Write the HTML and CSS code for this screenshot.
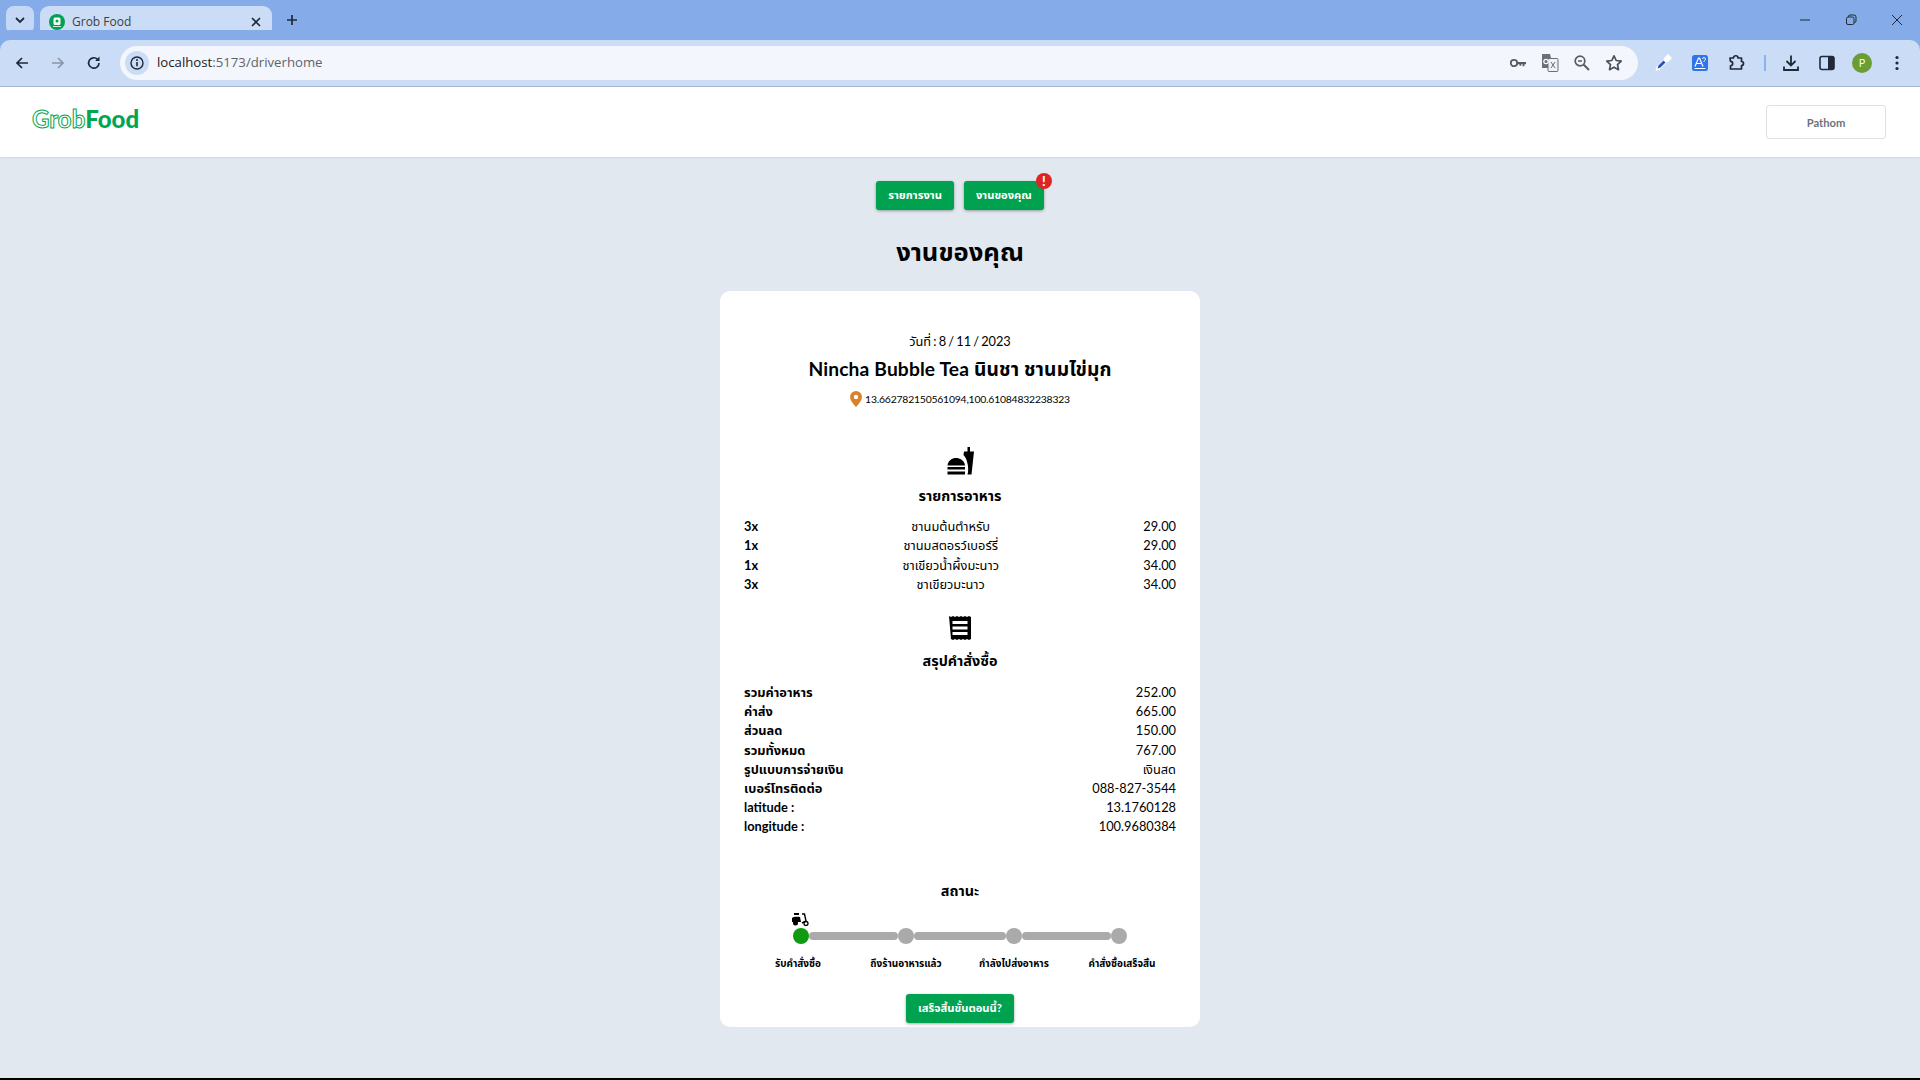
FILE: index.html
```html
<!DOCTYPE html>
<html lang="th">
	<head>
		<meta charset="utf-8">
		<title>Grob Food</title>
		<link rel="stylesheet" href="styles.css">
	</head>
	<body>
		<div class="tab-strip">
			<div class="tab-search">
				<svg width="12" height="12" viewBox="0 0 12 12"><path d="M2 4l4 4 4-4" fill="none" stroke="#1f2937" stroke-width="1.8"/></svg>
			</div>
			<div class="tab">
				<svg class="favicon" width="16" height="16" viewBox="0 0 16 16"><circle cx="8" cy="8" r="8" fill="#00a14f"/><rect x="4.5" y="3.5" width="7" height="7.5" rx="1.5" fill="#fff"/><circle cx="8" cy="7" r="1.5" fill="#00a14f"/><rect x="4" y="12" width="8" height="1" fill="#c9ecd8"/></svg>
				<span class="tab-title">Grob Food</span>
				<svg class="tab-close" width="10" height="10" viewBox="0 0 10 10"><path d="M1 1l8 8M9 1l-8 8" stroke="#1f2937" stroke-width="1.6"/></svg>
			</div>
			<svg class="new-tab" width="12" height="12" viewBox="0 0 12 12"><path d="M6 1v10M1 6h10" stroke="#1f2937" stroke-width="1.7"/></svg>
			<div class="window-controls">
				<svg width="12" height="12" viewBox="0 0 12 12"><path d="M1 6h10" stroke="#1f2937" stroke-width="1"/></svg>
				<svg width="12" height="12" viewBox="0 0 12 12"><rect x="1.5" y="3" width="7.5" height="7.5" rx="1.5" fill="none" stroke="#1f2937"/><path d="M3.5 3V2.5a1.5 1.5 0 0 1 1.5-1.5h4a2 2 0 0 1 2 2v4a1.5 1.5 0 0 1-1.5 1.5H9" fill="none" stroke="#1f2937"/></svg>
				<svg width="12" height="12" viewBox="0 0 12 12"><path d="M1 1l10 10M11 1L1 11" stroke="#1f2937" stroke-width="1"/></svg>
			</div>
		</div>

		<div class="toolbar">
			<div class="nav-buttons">
				<svg width="16" height="16" viewBox="0 0 16 16"><path d="M14 8H3M8 3L3 8l5 5" fill="none" stroke="#1f2937" stroke-width="1.7"/></svg>
				<svg width="16" height="16" viewBox="0 0 16 16"><path d="M2 8h11M8 3l5 5-5 5" fill="none" stroke="#8b95a5" stroke-width="1.7"/></svg>
				<svg width="16" height="16" viewBox="0 0 16 16"><path d="M13 8a5.2 5.2 0 1 1-1.6-3.8" fill="none" stroke="#1f2937" stroke-width="1.7"/><path d="M13.5 1.5v4.4H9.1z" fill="#1f2937"/></svg>
			</div>
			<div class="omnibox">
				<span class="site-info">
					<svg width="14" height="14" viewBox="0 0 14 14"><circle cx="7" cy="7" r="6" fill="none" stroke="#1f2937" stroke-width="1.4"/><path d="M7 6v4.2" stroke="#1f2937" stroke-width="1.6"/><circle cx="7" cy="4" r="1" fill="#1f2937"/></svg>
				</span>
				<span class="url"><span class="url-host">localhost</span>:5173/driverhome</span>
				<div class="omni-actions">
					<svg width="18" height="18" viewBox="0 0 18 18"><circle cx="5" cy="9" r="3.2" fill="none" stroke="#555c66" stroke-width="1.8"/><path d="M8 8h9v2.2h-1.6v2h-1.8v-2h-1.4v1.6h-1.7v-1.6H8z" fill="#555c66"/></svg>
					<svg width="18" height="18" viewBox="0 0 18 18"><path d="M1 0h8l1 4v10H1z" fill="#6b6f76"/><rect x="7" y="4.500" width="10" height="13" rx="1" fill="#eef1f5" stroke="#6b6f76"/><path d="M10 8l4 6M14 8l-4 6" stroke="#6b6f76" stroke-width="1"/><circle cx="5" cy="7.500" r="2.200" fill="none" stroke="#fff" stroke-width="1.200"/></svg>
					<svg width="18" height="18" viewBox="0 0 18 18"><circle cx="7" cy="7" r="4.800" fill="none" stroke="#555c66" stroke-width="1.700"/><path d="M5 7h4" stroke="#555c66" stroke-width="1.500"/><path d="M10.500 10.500L16 16" stroke="#555c66" stroke-width="2"/></svg>
					<svg width="18" height="18" viewBox="0 0 18 18"><path d="M9 1.800l2.200 4.700 5 .6-3.700 3.500 1 5.100L9 13.200l-4.500 2.500 1-5.100L1.800 7.100l5-.6z" fill="none" stroke="#4a505a" stroke-width="1.700" stroke-linejoin="round"/></svg>
				</div>
			</div>
			<div class="extensions">
				<svg width="20" height="20" viewBox="0 0 20 20"><path d="M12 5l3 3-8.500 8.800-4 1.200 1-4.200z" fill="#fff"/><path d="M4.500 15.500l1-3 5-5 2 2-5 5z" fill="#2b50b8"/><path d="M11 5l4-4 4 4-4 4z" fill="#fff"/></svg>
				<svg width="16" height="16" viewBox="0 0 16 16"><rect width="16" height="16" rx="2.500" fill="#2f74ea"/><path d="M3 11.500L6.500 3h1L11 11.500M4.500 8.500h4.500" fill="none" stroke="#fff" stroke-width="1.200"/><path d="M2.500 13.500h11" stroke="#fff"/><path d="M10.500 4a1.500 1.500 0 1 1 2 1.500l-.5.800v.7" fill="none" stroke="#fff"/></svg>
				<svg width="18" height="18" viewBox="0 0 18 18"><path d="M3 4h3.500a2 2 0 0 1 4.500 0H14.500v3.500a2 2 0 0 1 0 4V15H3.500v-3.200a2.200 2.200 0 0 0 0-4.400z" fill="none" stroke="#1f2937" stroke-width="1.700" stroke-linejoin="round"/></svg>
				<span class="toolbar-sep"></span>
				<svg width="18" height="18" viewBox="0 0 18 18"><path d="M9 1.500v9M4.500 7L9 11.500 13.500 7M2 12.500v3.500h14v-3.500" fill="none" stroke="#1f2937" stroke-width="1.800"/></svg>
				<svg width="16" height="16" viewBox="0 0 16 16"><rect x="1" y="1.500" width="14" height="13" rx="2" fill="none" stroke="#1f2937" stroke-width="1.600"/><path d="M9 1.500h4a2 2 0 0 1 2 2v9a2 2 0 0 1-2 2H9z" fill="#1f2937"/></svg>
				<span class="avatar">P</span>
				<svg class="menu-dots" width="14" height="16" viewBox="0 0 14 16"><circle cx="7" cy="2.500" r="1.600" fill="#1f2937"/><circle cx="7" cy="8" r="1.600" fill="#1f2937"/><circle cx="7" cy="13.500" r="1.600" fill="#1f2937"/></svg>
			</div>
		</div>

		<header class="site-header">
			<span class="logo"><span class="logo-grob">Grob</span><span class="logo-food">Food</span></span>
			<button class="user-button">Pathom</button>
		</header>

		<main class="page">
			<nav class="page-tabs">
				<button class="green-button">รายการงาน</button>
				<button class="green-button has-badge">งานของคุณ<span class="badge">!</span></button>
			</nav>
			<h1>งานของคุณ</h1>

			<section class="card">
				<p class="order-date">วันที่ : 8 / 11 / 2023</p>
				<h2 class="shop-name">Nincha Bubble Tea นินชา ชานมไข่มุก</h2>
				<p class="shop-location">
					<svg width="12" height="16" viewBox="0 0 12 16"><path d="M6 0a6 6 0 0 0-6 6c0 4 6 10 6 10s6-6 6-10a6 6 0 0 0-6-6z" fill="#d9822b"/><circle cx="6" cy="6" r="2.200" fill="#fff"/></svg>
					13.662782150561094,100.61084832238323
				</p>

				<svg class="section-icon food-icon" width="28" height="28" viewBox="0 0 28 28"><path d="M18 4.500h3.500V0h2.500v4.500H28l-2.500 23H21.500c1-3 1-8-.5-13-.8-2.700-2-5-3.500-6.500z" fill="#000"/><path d="M1.500 18.500C2 13.500 6 11 10 11s8.500 2.500 9 7.500z" fill="#000"/><rect x="1.500" y="20" width="17.500" height="2.500" fill="#000"/><rect x="1.500" y="24.500" width="17.500" height="3" fill="#000"/></svg>
				<h3 class="section-title">รายการอาหาร</h3>
				<ul class="food-list">
					<li class="row"><b>3x</b><span>ชานมต้นตำหรับ</span><span>29.00</span></li>
					<li class="row"><b>1x</b><span>ชานมสตอรว์เบอร์รี่</span><span>29.00</span></li>
					<li class="row"><b>1x</b><span>ชาเขียวน้ำผึ้งมะนาว</span><span>34.00</span></li>
					<li class="row"><b>3x</b><span>ชาเขียวมะนาว</span><span>34.00</span></li>
				</ul>

				<svg class="section-icon receipt-icon" width="22" height="24" viewBox="0 0 22 24"><path d="M0 0l2 1 2-1 2 1 2-1 2 1 2-1 2 1 2-1 2 1 2-1 2 1v22l-2 1-2-1-2 1-2-1-2 1-2-1-2 1-2-1-2 1-2-1z" fill="#000"/><rect x="3.500" y="5" width="15" height="3" fill="#fff"/><rect x="3.500" y="10.500" width="15" height="3" fill="#fff"/><rect x="3.500" y="16" width="15" height="3" fill="#fff"/></svg>
				<h3 class="section-title">สรุปคำสั่งซื้อ</h3>
				<ul class="summary-list">
					<li class="row"><b>รวมค่าอาหาร</b><span>252.00</span></li>
					<li class="row"><b>ค่าส่ง</b><span>665.00</span></li>
					<li class="row"><b>ส่วนลด</b><span>150.00</span></li>
					<li class="row"><b>รวมทั้งหมด</b><span>767.00</span></li>
					<li class="row"><b>รูปแบบการจ่ายเงิน</b><span>เงินสด</span></li>
					<li class="row"><b>เบอร์โทรติดต่อ</b><span>088-827-3544</span></li>
					<li class="row"><b>latitude :</b><span>13.1760128</span></li>
					<li class="row"><b>longitude :</b><span>100.9680384</span></li>
				</ul>

				<h3 class="section-title status-title">สถานะ</h3>
				<div class="stepper">
					<svg class="scooter" width="17" height="13" viewBox="0 0 17 13"><path d="M0 5c1-1.500 6-1.500 8-1l1 5H0z" fill="#000"/><rect x="2" y="0" width="5" height="2" fill="#000"/><circle cx="3.500" cy="10" r="2.500" fill="#000"/><circle cx="14" cy="10.500" r="2" fill="none" stroke="#000" stroke-width="1.300"/><path d="M10 1h2.500l1.500 7-4 2" fill="none" stroke="#000" stroke-width="1.400"/></svg>
					<span class="step-dot active"></span><span class="step-bar"></span>
					<span class="step-dot"></span><span class="step-bar"></span>
					<span class="step-dot"></span><span class="step-bar"></span>
					<span class="step-dot"></span>
				</div>
				<div class="step-labels">
					<span>รับคำสั่งซื้อ</span>
					<span>ถึงร้านอาหารแล้ว</span>
					<span>กำลังไปส่งอาหาร</span>
					<span>คำสั่งซื้อเสร็จสิ้น</span>
				</div>
				<button class="green-button finish-button">เสร็จสิ้นขั้นตอนนี้?</button>
			</section>
		</main>
		<div class="bottom-edge"></div>
	</body>
</html>
```

FILE: styles.css
```css
* {
	box-sizing: border-box;
}
html, body {
	height: 1080px;
	margin: 0;
	overflow: hidden;
}
body {
	display: flex;
	flex-direction: column;
	background: #e2e8f0;
	font-family: "Lato", "Noto Sans", "Noto Sans Thai", sans-serif;
	font-size: 12.8px;
	line-height: 19.2px;
	color: #000;
}
h1, h2, h3, p, ul {
	margin: 0;
	padding: 0;
}
ul {
	list-style: none;
}
button {
	font-family: inherit;
	cursor: pointer;
}

/* browser window */
.tab-strip {
	display: flex;
	align-items: flex-end;
	height: 40px;
	background: #85ace8;
	flex: none;
}
.tab-search {
	display: flex;
	align-items: center;
	justify-content: center;
	width: 28px;
	height: 28px;
	margin: 0 6px 6px 6px;
	border-radius: 8px;
	background: #c4d8f5;
}
.tab {
	display: flex;
	align-items: center;
	width: 232px;
	height: 34px;
	padding: 0 11px 3px 9px;
	border-radius: 9px 9px 0 0;
	background: #cbdcf6;
}
.tab-title {
	flex: 1;
	margin-left: 7px;
	font-family: "Open Sans", sans-serif;
	font-size: 12px;
	color: #3c4043;
}
.new-tab {
	margin: 0 0 14px 14px;
}
.window-controls {
	display: flex;
	gap: 34px;
	align-self: flex-start;
	margin: 14px 17px 0 auto;
}
.toolbar {
	display: flex;
	align-items: center;
	flex: none;
	height: 47px;
	padding-bottom: 1px;
	border-bottom: 1px solid #a9b6cf;
	border-radius: 10px 10px 0 0;
	background: #cbdcf6;
	box-shadow: 0 -10px 0 #85ace8;
}
.nav-buttons {
	display: flex;
	gap: 20px;
	width: 120px;
	padding-left: 14px;
}
.omnibox {
	display: flex;
	align-items: center;
	width: 1518px;
	height: 34px;
	padding: 0 15px 0 5px;
	border-radius: 17px;
	background: #f3f6fc;
}
.site-info {
	display: flex;
	align-items: center;
	justify-content: center;
	width: 24px;
	height: 24px;
	border-radius: 50%;
	background: #cbdcf6;
}
.url {
	margin-left: 8px;
	font-family: "Open Sans", sans-serif;
	font-size: 13.2px;
	color: #5f6368;
}
.url-host {
	color: #202124;
}
.omni-actions {
	display: flex;
	gap: 14px;
	margin-left: auto;
}
.extensions {
	display: flex;
	align-items: center;
	gap: 19px;
	margin-left: 15px;
}
.toolbar-sep {
	width: 2px;
	height: 16px;
	margin-right: -3px;
	background: #8db2e8;
}
.avatar {
	display: flex;
	align-items: center;
	justify-content: center;
	width: 20px;
	height: 20px;
	margin-left: -2px;
	border-radius: 50%;
	background: #6a9e35;
	font-family: "Open Sans", sans-serif;
	font-size: 11px;
	color: #fff;
}
.menu-dots {
	margin-left: -1px;
}

/* site */
.site-header {
	display: flex;
	align-items: center;
	justify-content: space-between;
	flex: none;
	height: 70px;
	padding: 0 34px 0 32px;
	background: #fff;
	box-shadow: 0 1px 2px rgba(0, 0, 0, .08);
}
.logo {
	margin-top: -7px;
	font-family: "Lato", sans-serif;
	font-size: 24px;
	line-height: 26px;
	color: #00a651;
}
.logo-grob {
	color: #fff;
	-webkit-text-stroke: 1px #00a651;
	font-weight: 700;
}
.logo-food {
	font-weight: 900;
}
.user-button {
	width: 120px;
	height: 34px;
	border: 1px solid #e0e0e0;
	border-radius: 3px;
	background: #fff;
	font-size: 11.2px;
	font-weight: 700;
	color: #6b7280;
}
.page {
	flex: 1;
	display: flex;
	flex-direction: column;
	align-items: center;
	padding-top: 24px;
}
.page-tabs {
	display: flex;
	gap: 10px;
}
.green-button {
	position: relative;
	height: 29px;
	padding: 0 12px;
	border: 0;
	border-radius: 3px;
	background: #00a14f;
	box-shadow: 0 1px 3px rgba(0, 0, 0, .35);
	font-size: 11.2px;
	font-weight: 700;
	color: #fff;
}
.badge {
	position: absolute;
	top: -8px;
	right: -8px;
	width: 16px;
	height: 16px;
	border-radius: 50%;
	background: #e02424;
	font-size: 13px;
	font-weight: 900;
	line-height: 16px;
	color: #fff;
}
h1 {
	margin-top: 25px;
	font-size: 25.6px;
	font-weight: 700;
	line-height: 32px;
}
.card {
	display: flex;
	flex-direction: column;
	align-items: center;
	width: 480px;
	height: 736px;
	margin-top: 24px;
	padding: 41px 24px 0;
	border-radius: 10px;
	background: #fff;
}
.order-date {
	word-spacing: -1px;
	letter-spacing: -.05px;
}
.shop-name {
	margin-top: 5px;
	font-size: 19.2px;
	font-weight: 700;
	line-height: 26px;
	letter-spacing: .15px;
}
.shop-location {
	display: flex;
	align-items: center;
	gap: 3px;
	margin-top: 9px;
	font-size: 10.4px;
	line-height: 16px;
	letter-spacing: -.2px;
}
.section-icon {
	display: block;
	flex: none;
}
.food-icon {
	margin-top: 40px;
}
.section-title {
	font-size: 14.4px;
	font-weight: 700;
	line-height: 20px;
}
.food-icon + .section-title {
	margin-top: 11px;
}
.food-list {
	width: 100%;
	margin-top: 11px;
}
.summary-list {
	width: 100%;
	margin-top: 12px;
}
.row {
	display: flex;
	justify-content: space-between;
}
.receipt-icon {
	margin-top: 22px;
}
.receipt-icon + .section-title {
	margin-top: 11px;
}
.status-title {
	margin-top: 44px;
}
.stepper {
	position: relative;
	display: grid;
	grid-template-columns: 16px 89px 16px 92px 16px 89px 16px;
	align-items: center;
	margin-top: 27px;
}
.scooter {
	position: absolute;
	top: -15px;
	left: -1px;
}
.step-dot {
	height: 16px;
	border-radius: 50%;
	background: #aaa;
}
.step-dot.active {
	background: #109a10;
}
.step-bar {
	height: 8px;
	border-radius: 4px;
	background: #aaa;
}
.step-labels {
	display: grid;
	grid-template-columns: repeat(4, 1fr);
	width: 100%;
	margin-top: 10px;
	font-size: 10px;
	font-weight: 700;
	text-align: center;
}
.finish-button {
	margin-top: 21px;
	width: 108px;
	padding: 0;
}
.bottom-edge {
	flex: none;
	height: 2px;
	background: #000;
}
```
